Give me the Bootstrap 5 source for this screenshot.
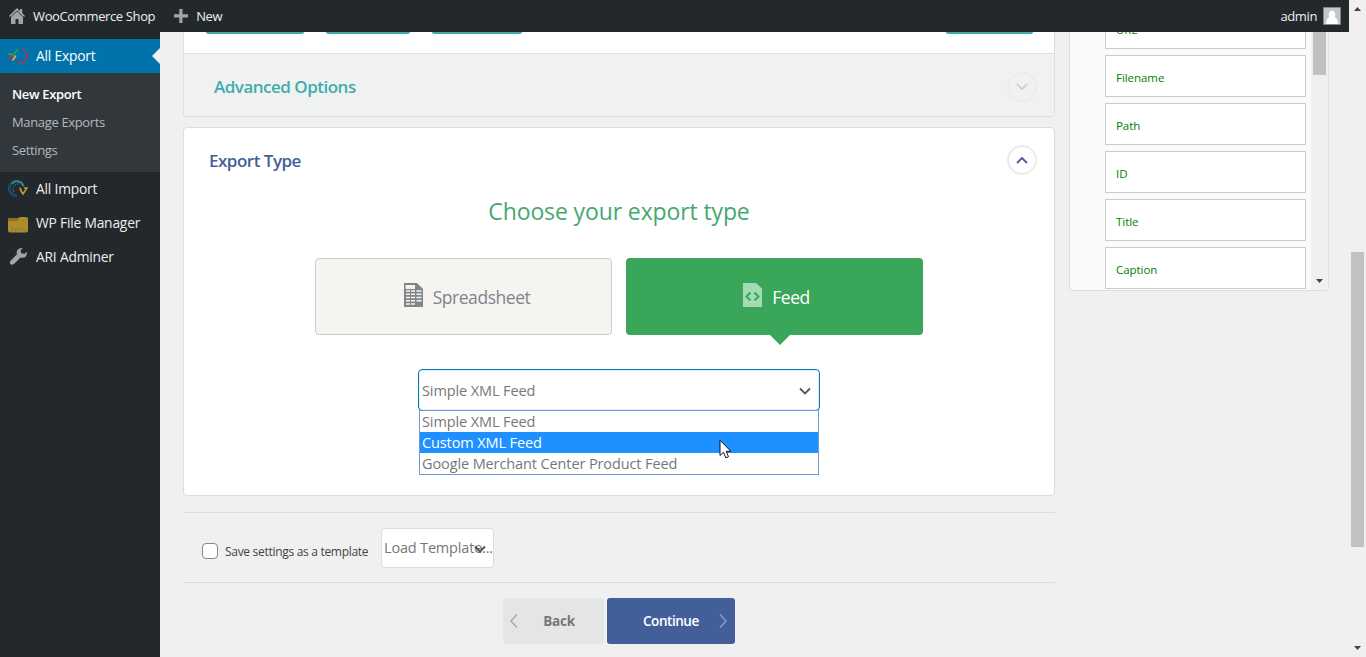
<!DOCTYPE html>
<html lang="en">
<head>
<meta charset="utf-8">
<meta name="viewport" content="width=device-width, initial-scale=1">
<title>All Export</title>
<link href="https://cdn.jsdelivr.net/npm/bootstrap@5.3.0/dist/css/bootstrap.min.css" rel="stylesheet">
<style>
body{font-family:"Open Sans","Noto Sans",sans-serif;background:#f0f0f0;font-size:13px;line-height:20px;height:657px;overflow:hidden}
svg{display:block;flex:none}
.topbar{height:32px;background:#23282d;color:#eee;letter-spacing:-.37px}
.side{width:160px;background:#23282d;color:#eee;padding-top:7px}
.side-item{height:34px;padding-left:8px;letter-spacing:-.2px;font-size:13.8px}
.side-item svg{margin-right:8px}
.side-item.current{background:#0073aa;color:#fff;position:relative}
.side-item.current::after{content:"";position:absolute;right:0;top:9px;border:8px solid transparent;border-left:0;border-right-color:#f0f0f0}
.submenu{background:#32373c;padding:7px 12px 8px;color:#b4b9be;line-height:28px;letter-spacing:-.35px}
.submenu .on{color:#fff;font-weight:600}
.scroll{width:17px;background:#f0f0f0}
.scroll .thumb{width:13px;background:#c1c1c1}
.content-col{width:872px;margin-left:23px}
.panel{background:#fff;border:1px solid #ddd;border-radius:4px}
.panel.first{border-top:0;border-radius:0 0 4px 4px;height:85px;margin-bottom:10px;overflow:hidden}
.tabs{height:22px;border-bottom:1px solid #ddd;padding-left:22px;padding-right:21px}
.tabs i{height:2px;background:#40acad;border-radius:0 0 3px 3px}
.adv{height:62px;background:#f0f2f1;padding:3px 17px 0 30px}
.sec{font-size:17px;font-weight:600;letter-spacing:-.5px;padding-top:1px}
.teal{color:#40acad}.blue{color:#425f9a}
.circ{width:30px;height:30px;border:2px solid #ebebeb;border-radius:50%}
.export{height:369px}
.export-head{height:64px;margin-bottom:2px;padding:0 17px 0 25px}
.export-head .sec{padding-top:2px}
.choose{color:#46a86f;font-size:23px;line-height:34px;letter-spacing:-.12px}
.type-btn{width:297px;height:77px;border-radius:4px;font-size:17.5px;letter-spacing:-.45px;position:relative;padding-top:1px}
.sheet{background:#f5f4f1;border:1px solid #ccc;color:#80858a;padding-left:7px}
.feed{background:#3aa65a;color:#fff;padding-left:4px}
.feed::after{content:"";position:absolute;left:143px;top:76px;border:11px solid transparent;border-bottom:0;border-top-color:#3aa65a}
.sel{width:402px;height:42px;border:1px solid #007cba;border-radius:4px;background:#fff;color:#777;font-size:14.5px;letter-spacing:-.11px;padding:1px 8px 0 3px;box-shadow:inset 0 0 0 1px #e4eef4;position:relative}
.opts{position:absolute;left:0;top:40px;width:400px;border:1px solid #7299d1;background:#fff;line-height:21px}
.opts div{padding-left:2px;height:21px}
.opts .hot{background:#1e90ff;color:#fff}
.pointer{position:absolute;left:299px;top:28px}
.template{height:71px;border-top:1px solid #ddd;border-bottom:1px solid #ddd;margin-top:16px;padding:0 0 0 19px}
.box{width:16px;height:16px;border:1px solid #7e8993;border-radius:4px;background:#fff;margin-top:6px}
.save{margin:8px 0 0 7px;width:144px;white-space:nowrap;font-size:12px;letter-spacing:-.3px;color:#444}
.load{width:113px;height:40px;margin-left:12px;border:1px solid #ddd;border-radius:4px;background:#fff;color:#777;font-size:14.5px;letter-spacing:-.18px;white-space:nowrap;position:relative;padding:0 0 0 2px}
.load svg{position:absolute;right:7px;top:16px}
.nav-btn{height:46px;border-radius:3px;font-size:13.5px}
.back{width:101px;background:#e4e6e5;color:#777;font-weight:700;letter-spacing:-.2px;padding:0 29px 0 7px}
.go{width:128px;background:#425f9a;color:#fff;font-weight:600;letter-spacing:-.45px;padding:0 8px 0 36px}
.fields{width:260px;height:259px;margin-left:14px;background:#fafafa;border:1px solid #ddd;border-top:0;border-radius:0 0 4px 4px;overflow:hidden}
.fields ul{margin:-25px 5px 0 35px;width:201px;gap:6px}
.fields li{height:42px;border:1px solid #ccc;background:#fff;color:#008000;font-size:11.5px;letter-spacing:-.05px;padding:4px 0 0 10px}
</style>
</head>
<body>
<div class="d-flex h-100">
  <div class="d-flex flex-column flex-grow-1">
    <header class="topbar d-flex align-items-center">
      <svg style="margin-left:9px" width="16" height="17" viewBox="0 0 16 17"><path fill="#a0a5aa" d="M8 0l3 3V1h2.200v4.100L16 8l-1 1-1-.9V16H9.500v-5h-3v5H2V8.100L1 9 0 8z"/><path fill="none" stroke="#23282d" stroke-width=".8" d="M1.500 9.200L8 3l6.500 6.200"/></svg>
      <span style="margin-left:8px">WooCommerce Shop</span>
      <svg style="margin-left:19px" width="14" height="14" viewBox="0 0 14 14"><path fill="#a0a5aa" d="M5.300 0h3.200v5.300H14v3.200H8.500V14H5.300V8.500H0V5.300h5.300z"/></svg>
      <span style="margin-left:8px">New</span>
      <span class="ms-auto me-1">admin</span>
      <svg style="margin:0 8px 0 2px" width="18" height="18" viewBox="0 0 18 18"><path fill="#c6c6c6" stroke="#82878c" d="M.5.5h17v17H.5z"/><path fill="#fff" d="M9 3.500a3.700 4 0 0 1 2.500 6.500c2.300 1 3.300 3 3.500 7H3c.2-4 1.200-6 3.500-7A3.700 4 0 0 1 9 3.500z"/></svg>
    </header>
    <div class="d-flex flex-grow-1">
      <aside class="side">
        <div class="side-item current d-flex align-items-center">
          <svg width="20" height="20" viewBox="0 0 20 20" fill="none"><path d="M14 2.500c3.500 1.500 5.500 5 4.500 9S13 18.500 9 17.500" stroke="#c9303a" stroke-width="1.300"/><path d="M1 9l4 5" stroke="#d8232a" stroke-width="2"/><path d="M4.500 14.500L8 9.500" stroke="#e8b33a" stroke-width="1.600"/><path d="M0 8h4l1.500 2M6 8l4-4.500" stroke="#35a04f" stroke-width="1.500"/></svg>All Export</div>
        <div class="submenu"><div class="on">New Export</div><div>Manage Exports</div><div>Settings</div></div>
        <div class="side-item d-flex align-items-center">
          <svg width="20" height="20" viewBox="0 0 20 20" fill="none"><path d="M9 16.500A7 7 0 0 1 3 5" stroke="#24436b" stroke-width="3"/><path d="M3.500 5C7 .5 14 1.500 15.500 7.500" stroke="#25888b" stroke-width="2.200"/><path d="M6 13C3.500 8 7 4.500 11 5" stroke="#25888b" stroke-dasharray="1.500 1"/><path d="M11 8.500l2.500 2" stroke="#c43b43" stroke-width="2"/><path d="M12 10l3 5 4-6h-3" stroke="#c6a02a" stroke-width="1.500"/></svg>All Import</div>
        <div class="side-item d-flex align-items-center">
          <svg style="margin-top:3px" width="20" height="17" viewBox="0 2 20 17"><path fill="#a98d2c" d="M0 5.500q0-1.500 2-1.500h8l2-1h6q2 0 2 2v11.500q0 2-2 2H2q-2 0-2-2z"/><path fill="#9a6c20" d="M0 5.500q0-1.500 2-1.500h8l1 .5-2 2.500H0z"/><path stroke="#7e6522" stroke-dasharray="1 2" d="M3 14.500h15M4 16.500h13"/></svg>WP File Manager</div>
        <div class="side-item d-flex align-items-center">
          <svg width="20" height="20" viewBox="0 0 20 20"><path fill="#a0a5aa" d="M16.700 6.800l2.100-2.100c.7 3.200-1.200 5.900-3.800 6.100-1 .1-1.800-.1-2.500-.4l-6.500 6.700c-1 1-2.700 1-3.500 0-.9-.9-.9-2.500.1-3.400L9 7.300c-1.200-3.300 1.100-6.300 5.800-6.200l-2.200 2.200.6 3z"/></svg>ARI Adminer</div>
      </aside>
      <main class="content-col">
        <section class="panel first">
          <div class="tabs d-flex"><i style="width:98px"></i><i style="width:84px;margin-left:22px"></i><i style="width:90px;margin-left:22px"></i><i class="ms-auto" style="width:87px"></i></div>
          <div class="adv d-flex align-items-center justify-content-between"><span class="sec teal">Advanced Options</span>
            <span class="circ d-flex align-items-center justify-content-center"><svg width="12" height="8" viewBox="0 0 12 8" fill="none" stroke="#c8caca" stroke-width="1.600"><path d="M1 1l5 5 5-5"/></svg></span></div>
        </section>
        <section class="panel export">
          <div class="export-head d-flex align-items-center justify-content-between"><span class="sec blue">Export Type</span>
            <span class="circ d-flex align-items-center justify-content-center"><svg width="12" height="8" viewBox="0 0 12 8" fill="none" stroke="#425f9a" stroke-width="1.800"><path d="M1 7l5-5 5 5"/></svg></span></div>
          <div class="choose text-center">Choose your export type</div>
          <div class="d-flex justify-content-center" style="gap:14px;margin-top:30px">
            <div class="type-btn sheet d-flex align-items-center justify-content-center">
              <svg style="margin:-4px 10px 0 0" width="19" height="24" viewBox="0 0 19 24"><path fill="#80858a" d="M0 0h13l6 6v18H0z"/><path fill="#f5f4f1" d="M1.500 2H11v4H1.500zM12.500 7.300h5v1.500h-5zM2 7.300h4v1.500H2zm5 0h4v1.500H7zM2 10.500h4V12H2zm5 0h4V12H7zm5.500 0h5V12h-5zM2 13.700h4v1.500H2zm5 0h4v1.500H7zm5.500 0h5v1.500h-5zM2 17h4v1.500H2zm5 0h4v1.500H7zm5.500 0h5v1.500h-5zM2 20.200h4v1.500H2zm5 0h4v1.500H7z"/></svg><span>Spreadsheet</span></div>
            <div class="type-btn feed d-flex align-items-center justify-content-center">
              <svg style="margin:-4px 10px 0 0" width="19" height="24" viewBox="0 0 19 24"><path fill="#a3dcb3" d="M0 0h13l6 5.500V24H0z"/><path fill="none" stroke="#3aa65a" stroke-width="2" d="M7.500 9.500L3.500 13.500l4 4M11.500 9.500l4 4-4 4"/></svg><span>Feed</span></div>
          </div>
          <div class="sel d-flex align-items-center justify-content-between mx-auto" style="margin-top:34px"><span>Simple XML Feed</span>
            <svg width="12" height="8" viewBox="0 0 12 8" fill="none" stroke="#555" stroke-width="1.800"><path d="M1 1.500l5 5 5-5"/></svg>
            <div class="opts"><div>Simple XML Feed</div><div class="hot">Custom XML Feed</div><div>Google Merchant Center Product Feed</div>
              <svg class="pointer" width="13" height="21" viewBox="0 0 13 21"><path fill="#fff" stroke="#111" d="M1 1.200v15.300l3.500-3.200 2.300 5.500 2.700-1.100-2.300-5.400h4.700z"/></svg></div>
          </div>
        </section>
        <div class="template d-flex align-items-center"><span class="box"></span><span class="save">Save settings as a template</span>
          <div class="load d-flex align-items-center"><span>Load Template...</span><svg width="12" height="8" viewBox="0 0 12 8" fill="none" stroke="#555" stroke-width="2"><path d="M1 1.500l5 5 5-5"/></svg></div></div>
        <div class="d-flex justify-content-center" style="gap:3px;margin-top:15px">
          <div class="nav-btn back d-flex align-items-center justify-content-between"><svg width="8" height="14" viewBox="0 0 8 14" fill="none" stroke="#a9abaa" stroke-width="1.500"><path d="M7 .5L1 7l6 6.500"/></svg><span>Back</span></div>
          <div class="nav-btn go d-flex align-items-center justify-content-between"><span>Continue</span><svg width="8" height="14" viewBox="0 0 8 14" fill="none" stroke="#8b9cc2" stroke-width="1.500"><path d="M1 .5L7 7l-6 6.500"/></svg></div>
        </div>
      </main>
      <aside class="fields d-flex">
        <ul class="list-unstyled d-flex flex-column flex-shrink-0"><li class="d-flex align-items-center flex-shrink-0">URL</li><li class="d-flex align-items-center flex-shrink-0">Filename</li><li class="d-flex align-items-center flex-shrink-0">Path</li><li class="d-flex align-items-center flex-shrink-0">ID</li><li class="d-flex align-items-center flex-shrink-0">Title</li><li class="d-flex align-items-center flex-shrink-0">Caption</li></ul>
        <div class="scroll d-flex flex-column align-items-center justify-content-between"><div class="thumb" style="height:43px"></div><svg style="margin-bottom:7px" width="7" height="4" viewBox="0 0 7 4"><path fill="#444" d="M0 0h7L3.500 4z"/></svg></div>
      </aside>
    </div>
  </div>
  <div class="scroll d-flex flex-column align-items-center flex-shrink-0" style="padding:7px 0"><svg width="7" height="4" viewBox="0 0 7 4"><path fill="#444" d="M0 4h7L3.500 0z"/></svg><div class="thumb" style="height:295px;margin-top:241px"></div><svg class="mt-auto" width="7" height="4" viewBox="0 0 7 4"><path fill="#444" d="M0 0h7L3.500 4z"/></svg></div>
</div>
<script src="https://cdn.jsdelivr.net/npm/bootstrap@5.3.0/dist/js/bootstrap.bundle.min.js"></script>
</body>
</html>
